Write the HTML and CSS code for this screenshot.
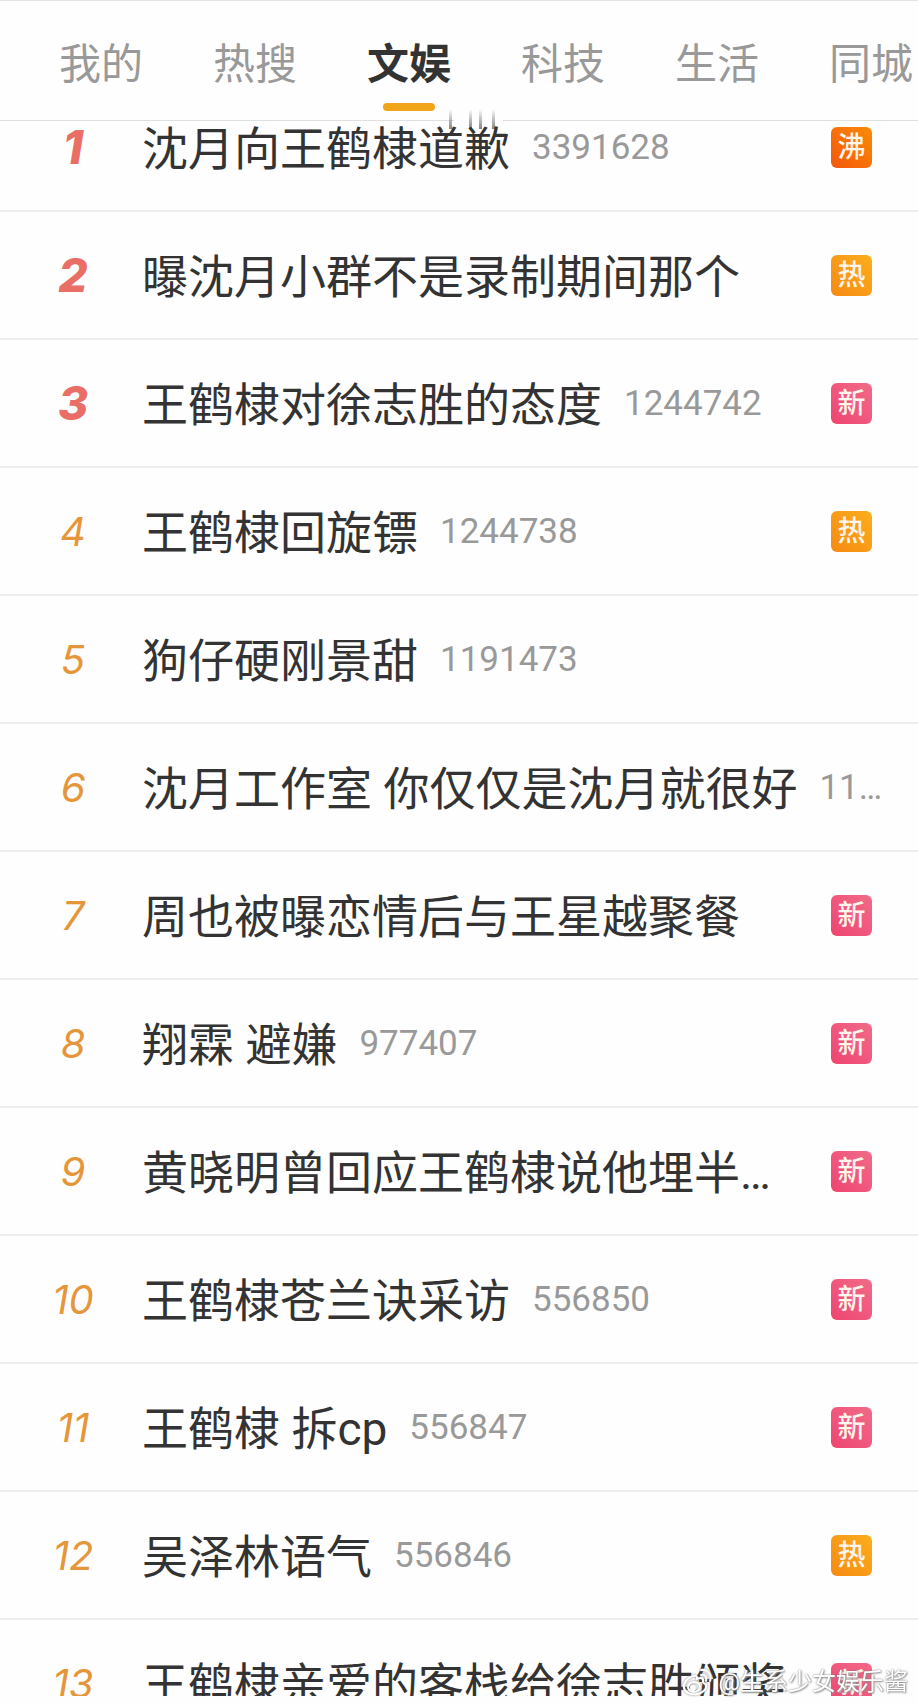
FILE: index.html
```html
<!DOCTYPE html>
<html lang="zh-CN">
<head>
  <meta charset="UTF-8">
  <title>文娱热搜</title>
  <meta name="viewport" content="width=device-width, initial-scale=1.0">
  <link rel="stylesheet" href="styles.css">
</head>
<body>

  <div class="screen">
    <nav class="tabs">
      <a href="#mine" class="tab">我的</a>
      <a href="#hot" class="tab">热搜</a>
      <a href="#ent" class="tab active">文娱</a>
      <a href="#tech" class="tab">科技</a>
      <a href="#life" class="tab">生活</a>
      <a href="#city" class="tab">同城</a>
      <!-- faded strokes of the first row showing over the bar -->
      <svg class="bleed" width="54" height="20" viewBox="0 0 54 20" aria-hidden="true">
        <defs>
          <linearGradient id="fade" x1="0" y1="0" x2="0" y2="1">
            <stop offset="0" stop-color="#333" stop-opacity="0"/>
            <stop offset="1" stop-color="#333" stop-opacity="0.6"/>
          </linearGradient>
        </defs>
        <rect x="5" y="10" width="49" height="4" fill="#fefefe"/>
        <rect x="0" y="0" width="3" height="20" fill="url(#fade)"/>
        <rect x="20" y="0" width="3" height="20" fill="url(#fade)"/>
        <rect x="30" y="0" width="3" height="20" fill="url(#fade)"/>
        <rect x="43" y="0" width="3" height="20" fill="url(#fade)"/>
      </svg>
    </nav>

    <ol class="list">
      <li class="item top"><span class="rank">1</span><a href="#1" class="title">沈月向王鹤棣道歉</a><span class="count">3391628</span><span class="badge boil">沸</span></li>
      <li class="item top"><span class="rank">2</span><a href="#2" class="title">曝沈月小群不是录制期间那个</a><span class="badge hot">热</span></li>
      <li class="item top"><span class="rank">3</span><a href="#3" class="title">王鹤棣对徐志胜的态度</a><span class="count">1244742</span><span class="badge new">新</span></li>
      <li class="item"><span class="rank">4</span><a href="#4" class="title">王鹤棣回旋镖</a><span class="count">1244738</span><span class="badge hot">热</span></li>
      <li class="item"><span class="rank">5</span><a href="#5" class="title">狗仔硬刚景甜</a><span class="count">1191473</span></li>
      <li class="item"><span class="rank">6</span><a href="#6" class="title">沈月工作室 你仅仅是沈月就很好</a><span class="count">11…</span></li>
      <li class="item"><span class="rank">7</span><a href="#7" class="title">周也被曝恋情后与王星越聚餐</a><span class="badge new">新</span></li>
      <li class="item"><span class="rank">8</span><a href="#8" class="title">翔霖 避嫌</a><span class="count">977407</span><span class="badge new">新</span></li>
      <li class="item"><span class="rank">9</span><a href="#9" class="title">黄晓明曾回应王鹤棣说他埋半…</a><span class="badge new">新</span></li>
      <li class="item"><span class="rank">10</span><a href="#10" class="title">王鹤棣苍兰诀采访</a><span class="count">556850</span><span class="badge new">新</span></li>
      <li class="item"><span class="rank">11</span><a href="#11" class="title">王鹤棣 拆cp</a><span class="count">556847</span><span class="badge new">新</span></li>
      <li class="item"><span class="rank">12</span><a href="#12" class="title">吴泽林语气</a><span class="count">556846</span><span class="badge hot">热</span></li>
      <li class="item"><span class="rank">13</span><a href="#13" class="title">王鹤棣亲爱的客栈给徐志胜颁奖</a><span class="badge new">新</span></li>
    </ol>
  </div>

  <div class="watermark">
    <svg width="30" height="28" viewBox="0 0 30 28" fill="none" stroke="#fff" stroke-width="2" stroke-linecap="round" aria-hidden="true">
      <path d="M11 8C5 10 1 15 2 20c1 5 7 7 13 6 6-1 10-5 9-9-1-2-3-2-3-3 1-4-2-5-6-3 0-3-1-4-4-3z"/>
      <ellipse cx="12" cy="19" rx="6" ry="5"/>
      <circle cx="11" cy="20" r="2" fill="#fff"/>
      <path d="M19 7c4-1 6 2 5 6M19 2c7-1 11 5 9 11"/>
    </svg>
    <span>@生系少女娱乐酱</span>
  </div>

</body>
</html>
```

FILE: styles.css
```css
* {
  margin: 0;
  padding: 0;
  box-sizing: border-box;
}

body {
  height: 100vh;
  padding-bottom: 8px;
  overflow: hidden;
  background-color: #fefefe;
  font-family: Roboto, "Noto Sans CJK SC", sans-serif;
  color: #333;
}

a {
  color: inherit;
  text-decoration: none;
}

.screen {
  height: 100%;
  overflow: hidden;
}

.tabs {
  position: relative;
  z-index: 1;
  display: flex;
  gap: 70px;
  height: 121px;
  padding-left: 59px;
  background-color: #fefefe;
  border-top: 1px solid #e4e4e4;
  border-bottom: 1px solid #e0e0e0;
}

.tab {
  flex: none;
  display: flex;
  flex-direction: column;
  align-items: center;
  padding-top: 34px;
  font-size: 42px;
  line-height: 60px;
  color: #999;
}

.tab.active {
  font-weight: bold;
  color: #333;
}

.tab.active::after {
  content: "";
  width: 52px;
  height: 8px;
  margin-top: 8px;
  border-radius: 4px;
  background-color: #f0a51b;
}

.bleed {
  position: absolute;
  left: 449px;
  top: 108px;
}

/* list is scrolled a little way under the tab bar */
.list {
  margin-top: -37px;
  list-style: none;
}

.item {
  display: flex;
  align-items: center;
  height: 128px;
  padding-right: 46px;
  border-bottom: 2px solid #eee;
  white-space: nowrap;
}

.rank {
  flex: none;
  width: 142px;
  padding-left: 4px;
  text-align: center;
  font-family: Inter, sans-serif;
  font-size: 40px;
  font-style: italic;
  color: #e6963a;
}

.top .rank {
  font-size: 46px;
  font-weight: 800;
  color: #e96f66;
}

.title {
  padding-top: 4px;
  font-size: 46px;
  line-height: 64px;
}

.count {
  padding-top: 1px;
  margin-left: 22px;
  font-size: 35px;
  line-height: 40px;
  color: #999;
}

.badge {
  flex: none;
  width: 41px;
  height: 41px;
  margin-left: auto;
  border-radius: 6px;
  text-align: center;
  font-size: 28px;
  font-weight: 500;
  line-height: 41px;
  color: #fff5ea;
}

.boil {
  background: linear-gradient(to top right, #f4570a, #fb8a08);
}

.hot {
  background: linear-gradient(to top right, #f58a12, #fbae1e);
}

.new {
  background: linear-gradient(to top right, #ee4570, #f26a88);
}

.watermark {
  position: fixed;
  right: 10px;
  bottom: 6px;
  z-index: 2;
  display: flex;
  align-items: center;
  gap: 6px;
  font-size: 24px;
  line-height: 32px;
  color: #fff;
  text-shadow: 0 0 2px #777, 1px 1px 2px #999;
}

.watermark svg {
  filter: drop-shadow(0 0 1px #888);
}
```
